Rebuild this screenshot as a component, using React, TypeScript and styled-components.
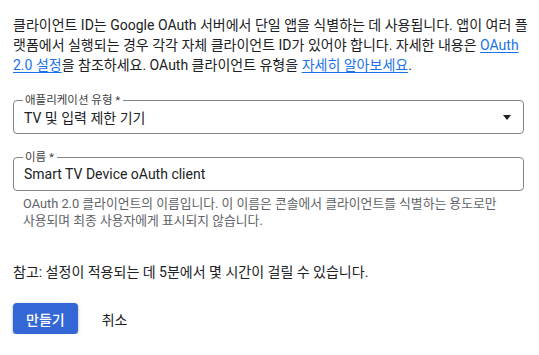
import React from "react";
import styled, { createGlobalStyle } from "styled-components";

const Global = createGlobalStyle`
  html, body { margin: 0; padding: 0; background: #ffffff; }
  body { font-family: Roboto, "Noto Sans CJK KR", sans-serif; color: #202124; }
`;

const Page = styled.div`
  padding: 15px 15px 0 13px;
  display: flex;
  flex-direction: column;
`;

const Intro = styled.p`
  margin: 0;
  font-size: 14px;
  line-height: 20px;
  color: #202124;
  white-space: nowrap;
`;

const Link = styled.a`
  color: #1a73e8;
  text-decoration: underline;
  text-underline-offset: 2px;
`;

const Field = styled.fieldset<{ $top: number }>`
  margin: ${(p) => p.$top}px 0 0 0;
  padding: 0 11px 6px 9px;
  border: 1px solid #80868b;
  border-radius: 4px;
  min-width: 0;
`;

const Legend = styled.legend`
  padding: 0 3px 0 2px;
  margin-left: 0;
  font-size: 11.5px;
  line-height: 14px;
  color: #3c4043;
`;

const Row = styled.div`
  display: flex;
  align-items: center;
  justify-content: space-between;
  height: 20px;
  padding-left: 1px;
  font-size: 14px;
  color: #202124;
`;

const Arrow = styled.span`
  width: 0;
  height: 0;
  border-left: 4px solid transparent;
  border-right: 4px solid transparent;
  border-top: 5px solid #202124;
  margin-right: 1px;
`;

const Helper = styled.div`
  margin-top: 4px;
  padding-left: 10px;
  font-size: 12.8px;
  line-height: 17px;
  color: #5f6368;
  white-space: nowrap;
`;

const Note = styled.p`
  margin: 33px 0 0 0;
  font-size: 14px;
  line-height: 20px;
  color: #202124;
`;

const Actions = styled.div`
  display: flex;
  align-items: center;
  gap: 12px;
  margin-top: 21px;
`;

const Button = styled.button<{ $primary?: boolean }>`
  height: 31px;
  padding: 0 ${(p) => (p.$primary ? 13 : 12)}px;
  border: none;
  border-radius: 4px;
  font-family: Roboto, "Noto Sans CJK KR", sans-serif;
  font-size: 14px;
  font-weight: ${(p) => (p.$primary ? 500 : 400)};
  background: ${(p) => (p.$primary ? "#3367d6" : "transparent")};
  color: ${(p) => (p.$primary ? "#ffffff" : "#202124")};
  box-shadow: ${(p) =>
    p.$primary
      ? "0 1px 2px rgba(60,64,67,0.3), 0 1px 3px 1px rgba(60,64,67,0.15)"
      : "none"};
  cursor: pointer;
`;

export default function App() {
  return (
    <>
      <Global />
      <Page>
        <Intro>
          클라이언트 ID는 Google OAuth 서버에서 단일 앱을 식별하는 데 사용됩니다. 앱이 여러 플
          <br />
          랫폼에서 실행되는 경우 각각 자체 클라이언트 ID가 있어야 합니다. 자세한 내용은{" "}
          <Link href="#">OAuth</Link>
          <br />
          <Link href="#">2.0 설정</Link>을 참조하세요. OAuth 클라이언트 유형을{" "}
          <Link href="#">자세히 알아보세요</Link>.
        </Intro>

        <Field $top={18}>
          <Legend>애플리케이션 유형 *</Legend>
          <Row>
            <span>TV 및 입력 제한 기기</span>
            <Arrow />
          </Row>
        </Field>

        <Field $top={16}>
          <Legend>이름 *</Legend>
          <Row>
            <span>Smart TV Device oAuth client</span>
          </Row>
        </Field>
        <Helper>
          OAuth 2.0 클라이언트의 이름입니다. 이 이름은 콘솔에서 클라이언트를 식별하는 용도로만
          <br />
          사용되며 최종 사용자에게 표시되지 않습니다.
        </Helper>

        <Note>참고: 설정이 적용되는 데 5분에서 몇 시간이 걸릴 수 있습니다.</Note>

        <Actions>
          <Button $primary>만들기</Button>
          <Button>취소</Button>
        </Actions>
      </Page>
    </>
  );
}
